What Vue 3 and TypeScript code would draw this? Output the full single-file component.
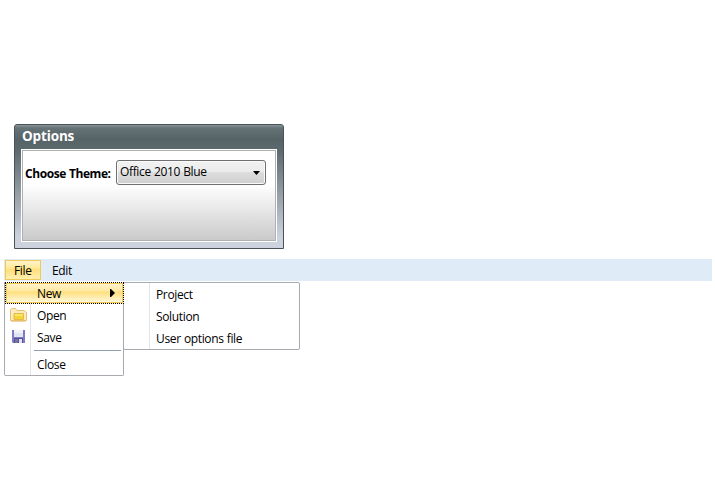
<script setup lang="ts">
import { ref } from 'vue'

const theme = ref<string>('Office 2010 Blue')
const subItems: string[] = ['Project', 'Solution', 'User options file']
</script>

<template>
  <main class="page">
    <section class="panel">
      <h1 class="title">Options</h1>
      <div class="body">
        <div class="content">
          <span class="label">Choose Theme:</span>
          <button class="combo" type="button">
            <span>{{ theme }}</span>
            <svg width="7" height="4" viewBox="0 0 7 4"><path d="M0 0H7L3.5 4Z" fill="#000" /></svg>
          </button>
        </div>
      </div>
    </section>
    <nav class="menubar">
      <div class="top active">File</div>
      <div class="top">Edit</div>
    </nav>
    <div class="menus">
      <div class="menu main">
        <div class="item new">
          <span class="text">New</span>
          <svg class="arrow" width="5" height="8" viewBox="0 0 5 8"><path d="M0 0H1L5 4L1 8H0Z" fill="#000" /></svg>
        </div>
        <div class="item">
          <svg class="icon" width="17" height="16" viewBox="0 0 17 16">
            <path d="M.5 13.5V2.5L1.5 1.5H5.5L7 3.5H14.5L16.5 5.5V13.5Z" fill="#fdebc0" stroke="#e8bf70" />
            <path d="M4 12.5V6.5H13.5V12.5Z" fill="#f4d536" stroke="#e5b94a" />
            <path d="M5 7H13V9H5Z" fill="#f9e566" />
            <path d="M1 14.5H15.5" stroke="#f0d49e" />
          </svg>
          <span class="text">Open</span>
        </div>
        <div class="item">
          <svg class="icon" width="17" height="16" viewBox="0 0 17 16">
            <path d="M2 1H15V14H3L2 13Z" fill="#7f7cc2" />
            <path d="M4 1H13V8H4Z" fill="#dfe3f2" />
            <path d="M4 1H13V4H4Z" fill="#f0f2f8" />
            <path d="M4 9H13V14H4Z" fill="#55519b" />
            <path d="M5 10H8V14H5Z" fill="#77759f" />
            <path d="M9 10H12V14H9Z" fill="#e3e3ee" />
          </svg>
          <span class="text">Save</span>
        </div>
        <div class="separator"></div>
        <div class="item close"><span class="text">Close</span></div>
      </div>
      <div class="menu sub">
        <div v-for="name in subItems" :key="name" class="item"><span class="text">{{ name }}</span></div>
      </div>
    </div>
  </main>
</template>

<style>
body { background: #fff; }
</style>

<style scoped>
* { box-sizing: border-box; }
.page {
  height: 500px;
  padding: 124px 3px 0 4px;
  font: 12px/16px "Open Sans", "Noto Sans", sans-serif;
  letter-spacing: -0.35px;
  word-spacing: 0.4px;
  color: #000;
}
.panel {
  width: 270px;
  height: 125px;
  margin-left: 10px;
  padding: 0 6px 6px;
  border: 1px solid #46535a;
  border-radius: 3px 3px 0 0;
  background: linear-gradient(#8a9698 0, #657276 3px, #566367 14px, #5b686c 24px, #cbd2dc 112px, #ccd3de 100%);
}
.title {
  height: 24px;
  margin: 0;
  padding-left: 1px;
  font-size: 13.5px;
  line-height: 23px;
  font-weight: 700;
  letter-spacing: -0.15px;
  color: #fff;
}
.body { height: 93px; border: 1px solid #fff; }
.content {
  display: flex;
  height: 91px;
  padding: 9px 0 0 2px;
  border: 1px solid #b0b0b0;
  background: linear-gradient(#fff 0, #fff 38%, #cacaca 100%);
}
.label {
  width: 91px;
  padding-top: 6px;
  font-weight: 700;
  letter-spacing: -0.43px;
  white-space: nowrap;
}
.combo {
  display: flex;
  align-items: center;
  justify-content: space-between;
  width: 150px;
  height: 25px;
  padding: 0 5px 2px 3px;
  border: 1px solid #707070;
  border-radius: 3px;
  background: linear-gradient(#f2f2f2 0, #ebebeb 50%, #dddddd 50%, #cfcfcf 100%);
  box-shadow: inset 0 0 0 1px #fafafa;
  font: inherit;
  letter-spacing: inherit;
  word-spacing: inherit;
  color: #000;
}
.combo svg { margin-top: 3px; }
.menubar {
  display: flex;
  height: 22px;
  margin: 10px 0 1px;
  padding: 1px 0 0 1px;
  background: #dfebf7;
}
.top { height: 20px; padding: 3px 0 0 11px; }
.active {
  width: 36px;
  padding: 2px 0 0 8px;
  border: 1px solid #f0ca58;
  background: linear-gradient(#fff4cc 0, #ffe995 40%, #ffdf78 45%, #ffefb0 100%);
}
.menus { display: flex; align-items: flex-start; }
.menu {
  border: 1px solid #a7abb0;
  border-radius: 0 0 2px 2px;
  background: linear-gradient(90deg, #fff 25px, #e2e4e7 25px, #e2e4e7 26px, #fff 26px);
}
.main { width: 120px; height: 94px; border-top: 0; }
.sub { width: 177px; height: 68px; margin-left: -1px; border-radius: 2px; }
.item { position: relative; display: flex; height: 22px; padding: 4px 0 0 32px; }
.new {
  z-index: 1;
  height: 22px;
  width: 119px;
  padding: 3px 0 0 31px;
  border: 1px dotted #000;
  background: linear-gradient(#fff5d3 0, #ffe8a0 40%, #ffdf7c 45%, #fffae5 100%);
  box-shadow: inset 0 0 0 1px #f2cb57;
}
.icon { position: absolute; left: 5px; top: 3px; }
.arrow { position: absolute; right: 8px; top: 6px; }
.separator { height: 1px; margin: 2px 2px 2px 29px; background: #8d9fb0; }
</style>
